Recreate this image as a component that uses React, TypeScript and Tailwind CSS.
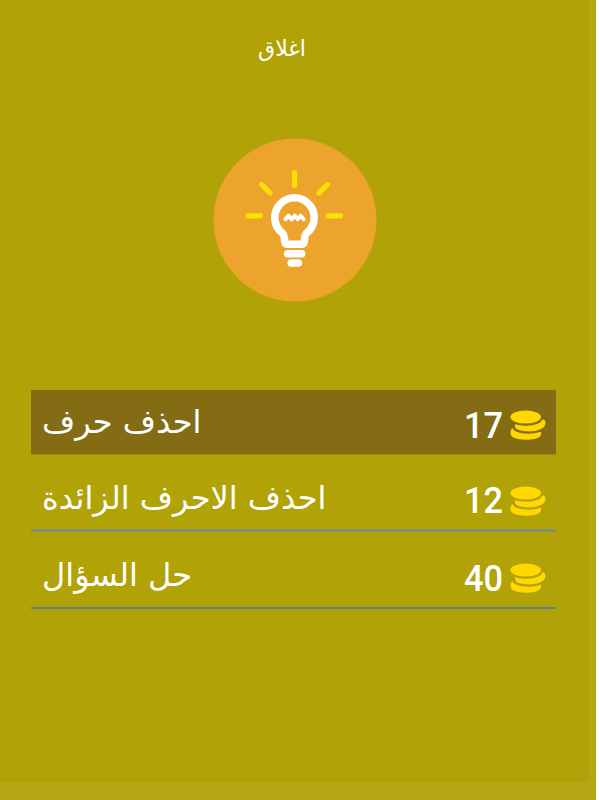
import React from "react";

interface Hint {
  label: string;
  cost: number;
  rowClass: string;
}

const hints: Hint[] = [
  {
    label: "احذف حرف",
    cost: 17,
    rowClass: "h-[65px] bg-[#846c15] border-b border-[#a08d0f]",
  },
  {
    label: "احذف الاحرف الزائدة",
    cost: 12,
    rowClass: "h-[67px] mt-[10px] pt-[1px] border-b-3 border-[#82906a]",
  },
  {
    label: "حل السؤال",
    cost: 40,
    rowClass: "h-[65px] mt-[12px] pb-[1px] border-b-2 border-[#5a8588]",
  },
];

const BulbIcon = () => (
  <svg width="164" height="164" viewBox="0 0 164 164" fill="none">
    <circle cx="82" cy="82" r="81.5" fill="#eda42c" />
    <g stroke="#fde100" strokeWidth="5.2" strokeLinecap="round">
      <path d="M81.5 34.7v12.6M48.5 46.5l8.5 8.5M114.5 46.5l-8.5 8.5M35 77.8h12.3M115.3 77.8h12.3" />
    </g>
    <path
      d="M71.8 103.5c-.6-4-.3-6-2.2-8.3a19.7 19.7 0 1 1 23.8 0c-1.9 2.3-1.6 4.3-2.2 8.3q-.3 2.7-3 2.7h-13.4q-2.7 0-3-2.7z"
      stroke="#fff"
      strokeWidth="7.6"
      strokeLinejoin="round"
    />
    <path
      d="M72.4 81.3l3.1-3.6 3.2 3.6 3.1-3.6 2.9 3.6 2.9-3.6 3.1 3.6"
      stroke="#fff"
      strokeWidth="4"
      strokeLinecap="round"
      strokeLinejoin="round"
    />
    <path d="M74.7 115.7h13.9M78.2 125h7.2" stroke="#fff" strokeWidth="7.6" strokeLinecap="round" />
  </svg>
);

const CoinsIcon = () => (
  <svg width="36" height="31" viewBox="0 0 36 31" fill="#ffd800">
    <ellipse cx="15.7" cy="7.1" rx="15.3" ry="6.5" />
    <path d="M5 14C10 16 21 16.500 27.500 13.800 30 12.800 31.600 11.800 31.600 10.300 33 9 34.300 9.500 35 10.700 36.500 14 34.500 17.500 30 19.600 24 22.200 12 22 7 19.300 5 18.200 4.800 16.500 5 14z" />
    <path d="M2.500 18.300C3.500 19.500 4 20.700 6 21.500 12 24 21 24.200 27 22.800L31 21.800V24.200C31 27.600 24.500 29.700 15.700 29.700 7 29.700.6 27.300.6 23.800V21.800C.6 20.300 1.200 19.100 2.500 18.300z" />
  </svg>
);

const App = () => {
  return (
    <div className="h-[800px] w-[599px] bg-white">
      <div className="h-full w-[596px] border-r-[7px] border-b-[18px] border-[#b5a715] bg-[#b1a207] text-white">
        <header className="flex h-[138px] justify-center pt-[35px] pr-[25px]">
          <button
            type="button"
            className="h-[28px] font-['DejaVu_Sans',sans-serif] text-[22px] leading-[28px]"
            dir="rtl"
          >
            اغلاق
          </button>
        </header>

        <div className="ml-[213px] h-[252px]">
          <BulbIcon />
        </div>

        <ul className="ml-[31px] w-[525px]">
          {hints.map((hint) => (
            <li
              key={hint.cost}
              className={`flex items-center justify-between pr-[10px] pl-[11px] ${hint.rowClass}`}
            >
              <span
                dir="rtl"
                className="font-['DejaVu_Sans',sans-serif] text-[32px] leading-[40px] whitespace-nowrap"
              >
                {hint.label}
              </span>
              <span className="flex items-center gap-[7px] pt-[7px] font-['Roboto',sans-serif] text-[37px] leading-[40px] font-medium">
                <span className="origin-right scale-x-[0.93]">{hint.cost}</span>
                <CoinsIcon />
              </span>
            </li>
          ))}
        </ul>
      </div>
    </div>
  );
};

export default App;
